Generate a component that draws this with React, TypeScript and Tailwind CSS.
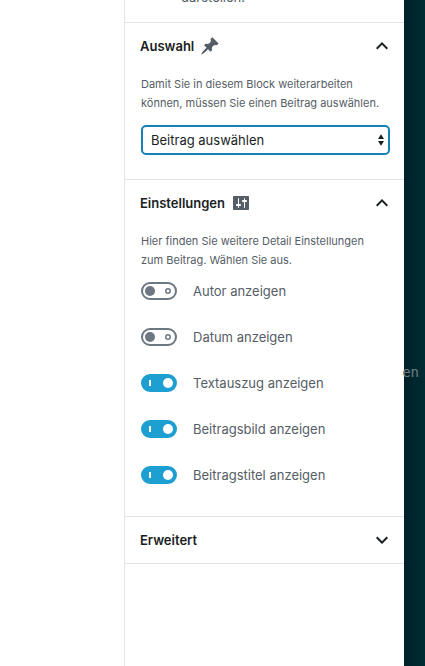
import { useState } from "react";

const initialOptions = [
  { id: "autor", label: "Autor anzeigen", on: false },
  { id: "datum", label: "Datum anzeigen", on: false },
  { id: "textauszug", label: "Textauszug anzeigen", on: true },
  { id: "beitragsbild", label: "Beitragsbild anzeigen", on: true },
  { id: "beitragstitel", label: "Beitragstitel anzeigen", on: true },
];

function PinIcon() {
  return (
    <svg className="size-5 shrink-0 fill-[#555d66]" viewBox="0 0 20 20" aria-hidden="true">
      <path d="M10.44 3.02l1.82-1.82 6.36 6.35-1.83 1.82c-1.05-.68-2.48-.57-3.41.36l-.75.75c-.92.93-1.04 2.35-.35 3.41l-1.83 1.82-2.41-2.41-2.8 2.79c-.42.42-3.38 2.71-3.8 2.29s1.86-3.39 2.28-3.81l2.79-2.79L4.1 9.36l1.83-1.82c1.05.69 2.48.57 3.4-.36l.75-.75c.93-.92 1.05-2.35.36-3.41z" />
    </svg>
  );
}

function SlidersIcon() {
  return (
    <svg className="size-5 shrink-0 fill-[#555d66]" viewBox="0 0 20 20" aria-hidden="true">
      <path d="M18 16V4c0-.55-.45-1-1-1H3c-.55 0-1 .45-1 1v12c0 .55.45 1 1 1h14c.55 0 1-.45 1-1zM8 11h1c.55 0 1 .45 1 1s-.45 1-1 1H8v1.5c0 .28-.22.5-.5.5s-.5-.22-.5-.5V13H6c-.55 0-1-.45-1-1s.45-1 1-1h1V5.5c0-.28.22-.5.5-.5s.5.22.5.5V11zm5-2h-1c-.55 0-1-.45-1-1s.45-1 1-1h1V5.5c0-.28.22-.5.5-.5s.5.22.5.5V7h1c.55 0 1 .45 1 1s-.45 1-1 1h-1v5.5c0 .28-.22.5-.5.5s-.5-.22-.5-.5V9z" />
    </svg>
  );
}

function Chevron({ open }: { open: boolean }) {
  return (
    <svg className="ml-auto size-6 shrink-0 fill-[#191e23]" viewBox="0 0 24 24" aria-hidden="true">
      <path
        d={
          open
            ? "M12,8l-6,6l1.41,1.41L12,10.83l4.59,4.58L18,14L12,8z"
            : "M7.41,8.59L12,13.17l4.59-4.58L18,10l-6,6l-6-6L7.41,8.59z"
        }
      />
    </svg>
  );
}

function Panel({
  title,
  icon,
  initiallyOpen = false,
  children,
}: {
  title: string;
  icon?: React.ReactNode;
  initiallyOpen?: boolean;
  children?: React.ReactNode;
}) {
  const [open, setOpen] = useState(initiallyOpen);
  return (
    <section className="border-b border-[#e2e4e7]">
      <h2>
        <button
          type="button"
          aria-expanded={open}
          onClick={() => setOpen(!open)}
          className="flex h-[46px] w-full items-center gap-1.5 pr-2.5 pl-[15px] text-left text-[13px] font-semibold text-[#191e23]"
        >
          <span className="pt-0.5">{title}</span>
          {icon}
          <Chevron open={open} />
        </button>
      </h2>
      {open && <div className="pt-1.5 pr-3.5 pb-6 pl-4">{children}</div>}
    </section>
  );
}

function Toggle({
  id,
  label,
  on,
  onChange,
}: {
  id: string;
  label: string;
  on: boolean;
  onChange: () => void;
}) {
  return (
    <div className="flex h-[18px] items-center gap-4">
      <span className="relative h-[18px] w-9 shrink-0">
        <input
          id={id}
          type="checkbox"
          checked={on}
          onChange={onChange}
          className="block h-[18px] w-9 appearance-none rounded-full border-2 border-[#6c7781] bg-white checked:border-[#1e9fd2] checked:bg-[#1e9fd2]"
        />
        <span
          aria-hidden="true"
          className="pointer-events-none absolute inset-0 flex items-center justify-between pr-1.5 pl-1"
        >
          {on ? (
            <>
              <span className="ml-1 h-1.5 w-0.5 bg-white" />
              <span className="-mr-0.5 size-2.5 rounded-full bg-white" />
            </>
          ) : (
            <>
              <span className="size-2.5 rounded-full bg-[#6c7781]" />
              <svg className="size-1.5" viewBox="0 0 6 6">
                <circle cx="3" cy="3" r="2.25" fill="none" stroke="#6c7781" strokeWidth="1.5" />
              </svg>
            </>
          )}
        </span>
      </span>
      <label htmlFor={id} className="text-[13px] leading-[18px]">
        {label}
      </label>
    </div>
  );
}

export default function App() {
  const [options, setOptions] = useState(initialOptions);
  const flip = (id: string) =>
    setOptions(options.map((o) => (o.id === id ? { ...o, on: !o.on } : o)));

  return (
    <div className="flex min-h-screen bg-white font-['Inter',sans-serif] text-[#555d66]">
      <main className="flex-1" />
      <aside className="w-[280px] shrink-0 border-l border-[#e2e4e7]">
        <div className="flex h-[23px] flex-col justify-end overflow-hidden border-b border-[#e2e4e7] pb-4 pl-14 text-[13px] leading-[18px]">
          <p>darstellen.</p>
        </div>

        <Panel title="Auswahl" icon={<PinIcon />} initiallyOpen>
          <label htmlFor="beitrag" className="block pr-1 text-[11px] leading-[19px]">
            Damit Sie in diesem Block weiterarbeiten können, müssen Sie einen Beitrag auswählen.
          </label>
          <div className="relative mt-3">
            <select
              id="beitrag"
              className="block h-[30px] w-full appearance-none rounded-[5px] border-2 border-[#1482b5] bg-white px-2 pt-0.5 text-[13px] text-[#191e23] outline-none"
            >
              <option>Beitrag auswählen</option>
            </select>
            <svg
              className="pointer-events-none absolute top-[9px] right-1.5 h-3 w-1.5 fill-[#191e23]"
              viewBox="0 0 6 12"
              aria-hidden="true"
            >
              <path d="M3 0.3L6 5H0zM3 11.7L6 7H0z" />
            </svg>
          </div>
        </Panel>

        <Panel title="Einstellungen" icon={<SlidersIcon />} initiallyOpen>
          <p className="pr-1 text-[11px] leading-[19px]">
            Hier finden Sie weitere Detail Einstellungen zum Beitrag. Wählen Sie aus.
          </p>
          <div className="mt-3 mb-2 flex flex-col gap-7">
            {options.map((o) => (
              <Toggle key={o.id} {...o} onChange={() => flip(o.id)} />
            ))}
          </div>
        </Panel>

        <Panel title="Erweitert" />
      </aside>
      <div className="w-[21px] shrink-0 bg-linear-to-r from-[#00222a] to-[#002b34] pt-[360px] pr-1.5 text-right font-['DejaVu_Sans_Mono',monospace] text-sm leading-6 text-[#6b7f80]">
        <span className="-ml-0.5">en</span>
      </div>
    </div>
  );
}
